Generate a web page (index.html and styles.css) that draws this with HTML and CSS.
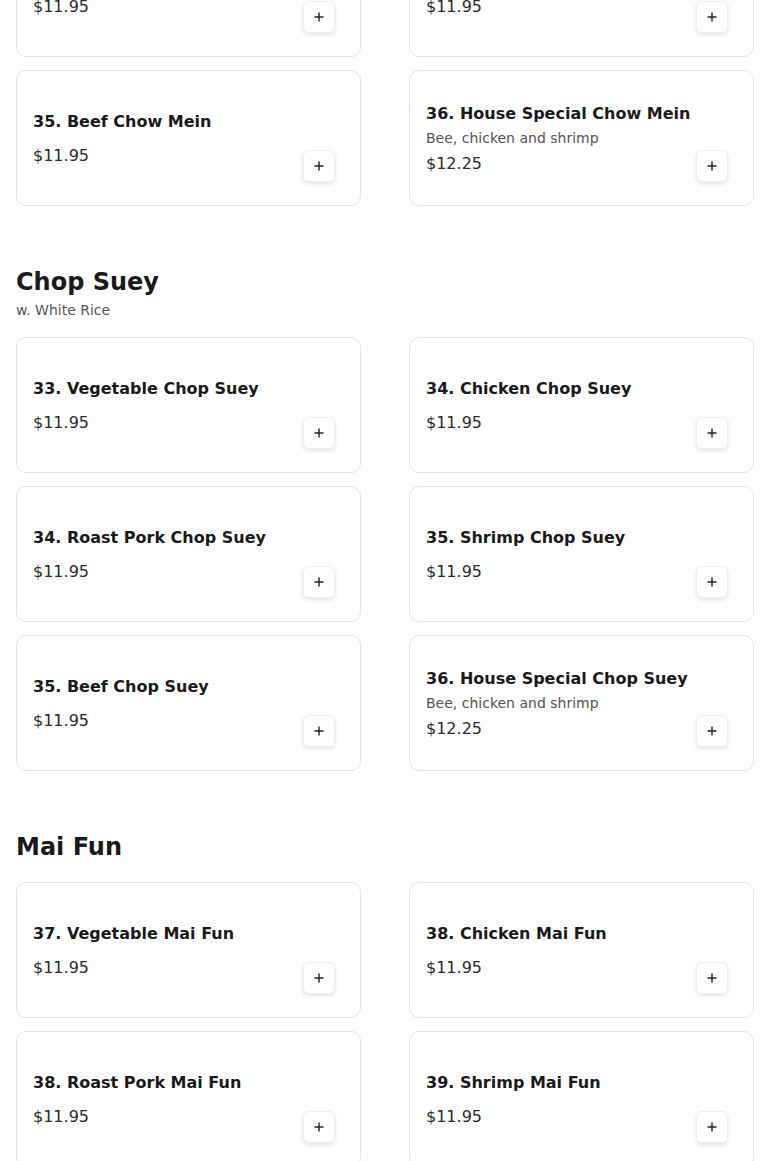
FILE: index.html
```html
<!DOCTYPE html>
<html>
  <head>
    <title>Menu</title>
    <meta charset="utf8">
    <link rel="stylesheet" href="styles.css">
  </head>
  <body>
    <div class="menu">

      <div class="section first">
        <div class="items">
          <div class="item">
            <div class="info">
              <div class="name">34. Roast Pork Chow Mein</div>
              <div class="price">$11.95</div>
            </div>
            <button class="add"><svg width="10" height="10" viewBox="0 0 10 10"><path d="M5 0.5v9M0.5 5h9"/></svg></button>
          </div>
          <div class="item">
            <div class="info">
              <div class="name">35. Shrimp Chow Mein</div>
              <div class="price">$11.95</div>
            </div>
            <button class="add"><svg width="10" height="10" viewBox="0 0 10 10"><path d="M5 0.5v9M0.5 5h9"/></svg></button>
          </div>
          <div class="item">
            <div class="info">
              <div class="name">35. Beef Chow Mein</div>
              <div class="price">$11.95</div>
            </div>
            <button class="add"><svg width="10" height="10" viewBox="0 0 10 10"><path d="M5 0.5v9M0.5 5h9"/></svg></button>
          </div>
          <div class="item">
            <div class="info">
              <div class="name">36. House Special Chow Mein</div>
              <div class="desc">Bee, chicken and shrimp</div>
              <div class="price">$12.25</div>
            </div>
            <button class="add"><svg width="10" height="10" viewBox="0 0 10 10"><path d="M5 0.5v9M0.5 5h9"/></svg></button>
          </div>
        </div>
      </div>

      <div class="section">
        <h2>Chop Suey</h2>
        <p class="note">w. White Rice</p>
        <div class="items">
          <div class="item">
            <div class="info">
              <div class="name">33. Vegetable Chop Suey</div>
              <div class="price">$11.95</div>
            </div>
            <button class="add"><svg width="10" height="10" viewBox="0 0 10 10"><path d="M5 0.5v9M0.5 5h9"/></svg></button>
          </div>
          <div class="item">
            <div class="info">
              <div class="name">34. Chicken Chop Suey</div>
              <div class="price">$11.95</div>
            </div>
            <button class="add"><svg width="10" height="10" viewBox="0 0 10 10"><path d="M5 0.5v9M0.5 5h9"/></svg></button>
          </div>
          <div class="item">
            <div class="info">
              <div class="name">34. Roast Pork Chop Suey</div>
              <div class="price">$11.95</div>
            </div>
            <button class="add"><svg width="10" height="10" viewBox="0 0 10 10"><path d="M5 0.5v9M0.5 5h9"/></svg></button>
          </div>
          <div class="item">
            <div class="info">
              <div class="name">35. Shrimp Chop Suey</div>
              <div class="price">$11.95</div>
            </div>
            <button class="add"><svg width="10" height="10" viewBox="0 0 10 10"><path d="M5 0.5v9M0.5 5h9"/></svg></button>
          </div>
          <div class="item">
            <div class="info">
              <div class="name">35. Beef Chop Suey</div>
              <div class="price">$11.95</div>
            </div>
            <button class="add"><svg width="10" height="10" viewBox="0 0 10 10"><path d="M5 0.5v9M0.5 5h9"/></svg></button>
          </div>
          <div class="item">
            <div class="info">
              <div class="name">36. House Special Chop Suey</div>
              <div class="desc">Bee, chicken and shrimp</div>
              <div class="price">$12.25</div>
            </div>
            <button class="add"><svg width="10" height="10" viewBox="0 0 10 10"><path d="M5 0.5v9M0.5 5h9"/></svg></button>
          </div>
        </div>
      </div>

      <div class="section">
        <h2>Mai Fun</h2>
        <div class="items">
          <div class="item">
            <div class="info">
              <div class="name">37. Vegetable Mai Fun</div>
              <div class="price">$11.95</div>
            </div>
            <button class="add"><svg width="10" height="10" viewBox="0 0 10 10"><path d="M5 0.5v9M0.5 5h9"/></svg></button>
          </div>
          <div class="item">
            <div class="info">
              <div class="name">38. Chicken Mai Fun</div>
              <div class="price">$11.95</div>
            </div>
            <button class="add"><svg width="10" height="10" viewBox="0 0 10 10"><path d="M5 0.5v9M0.5 5h9"/></svg></button>
          </div>
          <div class="item">
            <div class="info">
              <div class="name">38. Roast Pork Mai Fun</div>
              <div class="price">$11.95</div>
            </div>
            <button class="add"><svg width="10" height="10" viewBox="0 0 10 10"><path d="M5 0.5v9M0.5 5h9"/></svg></button>
          </div>
          <div class="item">
            <div class="info">
              <div class="name">39. Shrimp Mai Fun</div>
              <div class="price">$11.95</div>
            </div>
            <button class="add"><svg width="10" height="10" viewBox="0 0 10 10"><path d="M5 0.5v9M0.5 5h9"/></svg></button>
          </div>
        </div>
      </div>

    </div>
  </body>
</html>
```

FILE: styles.css
```css
body {
  margin: 0;
  background: #fff;
  color: #1a1a1a;
  font-family: 'DejaVu Sans', sans-serif;
}

.menu {
  padding: 0 16px;
}

.section {
  margin-top: 58px;
}

/* page is scrolled: the previous section is partly above the fold */
.section.first {
  margin-top: -79px;
}

h2 {
  margin: 0;
  font-size: 24px;
  line-height: 36px;
  font-weight: bold;
  color: #1a1a1a;
}

.note {
  margin: 0;
  font-size: 14px;
  line-height: 20px;
  color: #555;
}

.items {
  display: grid;
  grid-template-columns: 1fr 1fr;
  column-gap: 48px;
  row-gap: 13px;
  margin-top: 17px;
}

.section.first .items {
  margin-top: 0;
}

.item {
  display: flex;
  height: 136px;
  box-sizing: border-box;
  padding: 16px;
  border: 1px solid #e3e3e3;
  border-radius: 10px;
  background: #fff;
}

.info {
  flex: 1;
  align-self: center;
  padding-top: 2px;
}

.name {
  font-size: 16px;
  line-height: 24px;
  font-weight: bold;
  color: #1a1a1a;
}

.desc {
  margin-top: 2px;
  font-size: 14px;
  line-height: 20px;
  color: #555;
}

.price {
  margin-top: 10px;
  font-size: 16px;
  line-height: 24px;
  color: #2b2b2b;
}

.desc + .price {
  margin-top: 4px;
}

.add {
  align-self: flex-end;
  display: flex;
  align-items: center;
  justify-content: center;
  width: 32px;
  height: 32px;
  margin: 0 9px 7px 0;
  padding: 0;
  border: 1px solid #efefef;
  border-radius: 6px;
  background: #fff;
  box-shadow: 0 2px 4px rgba(0, 0, 0, 0.12);
  cursor: pointer;
}

.add path {
  stroke: #222;
  stroke-width: 1.4;
  fill: none;
}
```
